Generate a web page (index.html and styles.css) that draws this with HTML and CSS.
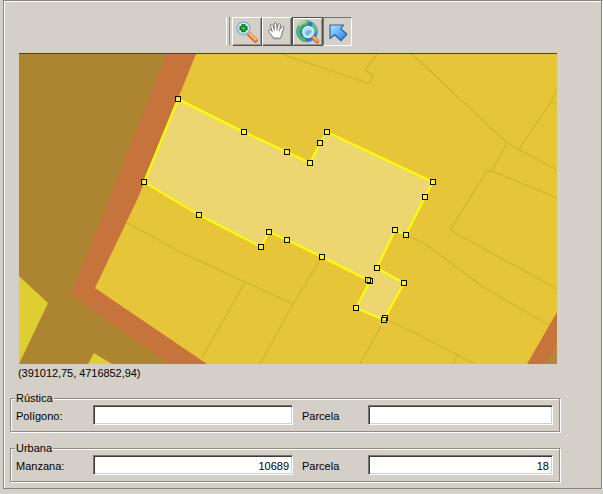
FILE: index.html
```html
<!DOCTYPE html>
<html lang="es">
<head>
<meta charset="utf-8">
<title>Parcela</title>
<link rel="stylesheet" href="styles.css">
</head>
<body>
<main class="panel">
  <div class="toolbar">
    <span class="grip"></span>
    <button class="tool" aria-label="Acercar">
      <svg width="24" height="24" viewBox="0 0 24 24">
        <path d="M14 14L20.500 20.500" stroke="#d8733c" stroke-width="4.600" stroke-linecap="round"/>
        <path d="M14.500 13.500L20.500 19.500" stroke="#ffc16f" stroke-width="2.200" stroke-linecap="round"/>
        <circle cx="8.500" cy="8.300" r="6.400" fill="#d3eef7" stroke="#87b8d2" stroke-width="1.500"/>
        <path d="M8.500 4.300V12.300M4.500 8.300H12.500" stroke="#075c16" stroke-width="4"/>
        <path d="M8.500 5.400V11.200M5.600 8.300H11.400" stroke="#32d23c" stroke-width="1.600"/>
      </svg>
    </button>
    <button class="tool" aria-label="Mover">
      <svg width="24" height="24" viewBox="0 0 24 24">
        <path d="M8 18C7 15 4 12.500 3.600 11.100C3.300 9.600 5 9.300 6 10.300L7.300 11.400L5.500 6C5 4.200 7.200 3.700 7.900 5.300L9.200 9L9.100 4C9.100 2.200 11.400 2.200 11.600 4L12.100 8.700L13.200 4.500C13.700 2.900 15.700 3.400 15.400 5.200L14.800 9.400L16.700 6.800C17.700 5.600 19.400 6.600 18.700 8.200L17 13C16.700 15 16.200 16.700 15.400 18.300Z" fill="#fff" stroke="#77736e"/>
        <path d="M9.200 9L9.500 11M12.100 8.700V11M14.800 9.400L14.200 11.500M8.500 18.800H15.200" fill="none" stroke="#99958f"/>
      </svg>
    </button>
    <button class="tool tool-wide" aria-label="Vista general">
      <svg width="26" height="26" viewBox="0 0 26 26">
        <circle cx="12" cy="12.500" r="10.500" fill="#2477c8" stroke="#5ba4d9"/>
        <path d="M2 14C0 6 8 0 15 2L12 6L8 7L5 12L6 17L11 20L10 23C6 22 3 19 2 14Z" fill="#55b85b"/>
        <path d="M18 4C22 7 23 12 20.500 15L19 11L16.500 8Z" fill="#5ac37b"/>
        <path d="M4 7Q7 3 11 3" fill="none" stroke="#a4df80" stroke-width="2"/>
        <circle cx="13.200" cy="13" r="5.600" fill="#b8e1f3" stroke="#d6edf8" stroke-width="1.300"/>
        <path d="M10 14Q12 9 17 12Q15 16 12 17Z" fill="#73b7de"/>
        <path d="M18.500 18.500L22.200 22.500" stroke="#db713c" stroke-width="4.200" stroke-linecap="round"/>
        <path d="M18.500 18L21.800 21.500" stroke="#ffc28b" stroke-width="1.800" stroke-linecap="round"/>
      </svg>
    </button>
    <button class="tool tool-on" aria-label="Seleccionar">
      <svg width="24" height="24" viewBox="0 0 24 24">
        <defs><linearGradient id="blue" x1="0" y1="0" x2="1" y2="1"><stop offset="0" stop-color="#bce5ff"/><stop offset=".5" stop-color="#63b2f2"/><stop offset="1" stop-color="#2778d0"/></linearGradient></defs>
        <path d="M4 5H17.500L14.800 8.700L21 14.200L15 20.700L8.800 14.700L4 18.500Z" fill="url(#blue)" stroke="#2264b3" stroke-width="1.200" stroke-linejoin="round"/>
      </svg>
    </button>
  </div>

  <svg class="map" width="538" height="310" viewBox="19 54 538 310">
    <rect x="19" y="54" width="538" height="310" fill="#ad8531"/>
    <path d="M166 54H557V364H169L71 294L108 202Z" fill="#c6743b"/>
    <path d="M196 54H557V312L527 364H207L95 288L137 200Z" fill="#e6c638"/>
    <path d="M557 343V364H545Z" fill="#b6843a"/>
    <path d="M19 276L48 303L19 364ZM88 364L94 353L112 364Z" fill="#dece31"/>
    <g class="plots">
      <path d="M281 54L370 84L373 76L365 70L377 54M412 54L507 143L557 170M557 89L551 102L519 149M551 102L557 104M507 143L492 171L557 198M492 171L487 171L450 230L557 289M406 235L424 243L483 287L549 325M126 222L180 252L293 304L322 257M293 304L260 364M245 282L202 358M385 319L415 333L475 364M381 326L360 364M458 355L453 364"/>
    </g>
    <path class="parcel" d="M178 99L244 132L287 152L310 163L320 143L327 132L433 182L425 197L406 235L395 230L377 268L404 283L385 318L384 320L356 308L370 281L368 280L322 257L287 240L269 232L261 247L199 215L144 182Z"/>
    <g class="nodes">
      <rect x="175.500" y="96.500" width="5" height="5"/>
      <rect x="241.500" y="129.500" width="5" height="5"/>
      <rect x="284.500" y="149.500" width="5" height="5"/>
      <rect x="307.500" y="160.500" width="5" height="5"/>
      <rect x="317.500" y="140.500" width="5" height="5"/>
      <rect x="324.500" y="129.500" width="5" height="5"/>
      <rect x="430.500" y="179.500" width="5" height="5"/>
      <rect x="422.500" y="194.500" width="5" height="5"/>
      <rect x="403.500" y="232.500" width="5" height="5"/>
      <rect x="392.500" y="227.500" width="5" height="5"/>
      <rect x="374.500" y="265.500" width="5" height="5"/>
      <rect x="401.500" y="280.500" width="5" height="5"/>
      <rect x="382.500" y="315.500" width="5" height="5"/>
      <rect x="381.500" y="317.500" width="5" height="5"/>
      <rect x="353.500" y="305.500" width="5" height="5"/>
      <rect x="367.500" y="278.500" width="5" height="5"/>
      <rect x="365.500" y="277.500" width="5" height="5"/>
      <rect x="319.500" y="254.500" width="5" height="5"/>
      <rect x="284.500" y="237.500" width="5" height="5"/>
      <rect x="266.500" y="229.500" width="5" height="5"/>
      <rect x="258.500" y="244.500" width="5" height="5"/>
      <rect x="196.500" y="212.500" width="5" height="5"/>
      <rect x="141.500" y="179.500" width="5" height="5"/>
    </g>
  </svg>
  <div class="coords">(391012,75, 4716852,94)</div>

  <section class="group">
    <h2 class="legend">Rústica</h2>
    <div class="fields">
      <label for="poligono">Polígono:</label><input id="poligono">
      <label class="second" for="parcela-r">Parcela</label><input id="parcela-r">
    </div>
  </section>
  <section class="group">
    <h2 class="legend">Urbana</h2>
    <div class="fields">
      <label for="manzana">Manzana:</label><input id="manzana" value="10689">
      <label class="second" for="parcela-u">Parcela</label><input id="parcela-u" value="18">
    </div>
  </section>
</main>
</body>
</html>
```
FILE: styles.css
```css
* { box-sizing: border-box; }
body {
  margin: 0;
  background: #d4d0c8;
  color: #000;
  font: 11px/13px "Liberation Sans", Arial, sans-serif;
  overflow: hidden;
}
.panel {
  width: 599px;
  height: 489px;
  margin-left: 3px;
  border: 1px solid #87837f;
  box-shadow: 1px 1px #fff, inset 1px 1px #fff;
}
.toolbar {
  display: flex;
  height: 52px;
  padding: 16px 0 0 222px;
  align-items: flex-start;
}
.grip {
  width: 4px;
  height: 28px;
  margin-right: 2px;
  border: solid;
  border-width: 0 1px;
  border-color: #fff #87837f #fff #fff;
}
.tool {
  display: flex;
  align-items: center;
  justify-content: center;
  width: 30px;
  height: 29px;
  padding: 0;
  background: #d4d0c8;
  border: 1px solid;
  border-color: #fff #55514d #55514d #fff;
  box-shadow: inset -1px -1px #99958f;
}
.tool svg { flex: none; }
.tool-wide {
  width: 31px;
  border-color: #55514d;
  box-shadow: inset 1px 1px #fff, inset -1px -1px #99958f;
}
.tool-on {
  width: 29px;
  border-color: #77736e #fff #fff #77736e;
  box-shadow: none;
}
.map {
  display: block;
  margin-left: 15px;
  box-sizing: content-box;
  border-top: 1px solid #444034;
}
.plots path { fill: none; stroke: #cdb829; stroke-width: 1.3; }
.parcel { fill: #edd66f; stroke: #ff0; stroke-width: 2; }
.nodes rect { fill: #ff0; fill-opacity: .7; stroke: #000; }
.coords {
  height: 34px;
  padding: 3px 0 0 14px;
  letter-spacing: -0.05px;
}
.group {
  width: 550px;
  height: 34px;
  margin: 0 0 16px 6px;
  border: 1px solid #8e8a84;
  box-shadow: inset 1px 1px #fff, 1px 1px #fff;
}
.legend {
  width: max-content;
  height: 13px;
  margin: -7px 0 0 4px;
  padding: 0 1px;
  background: #d4d0c8;
  font: inherit;
}
.fields {
  display: grid;
  grid-template-columns: 77px 200px 75px 185px;
  align-items: center;
  padding-left: 5px;
}
.fields label { padding-top: 2px; }
.fields .second { padding-left: 9px; }
.fields input {
  width: 100%;
  height: 20px;
  padding: 2px 3px 0;
  border: 1px solid;
  border-color: #77736e #fff #fff #77736e;
  border-radius: 0;
  box-shadow: inset 1px 1px #3e3b38, inset -1px -1px #d4d0c8;
  background: #fff;
  color: #000;
  font: inherit;
  text-align: right;
}
```
